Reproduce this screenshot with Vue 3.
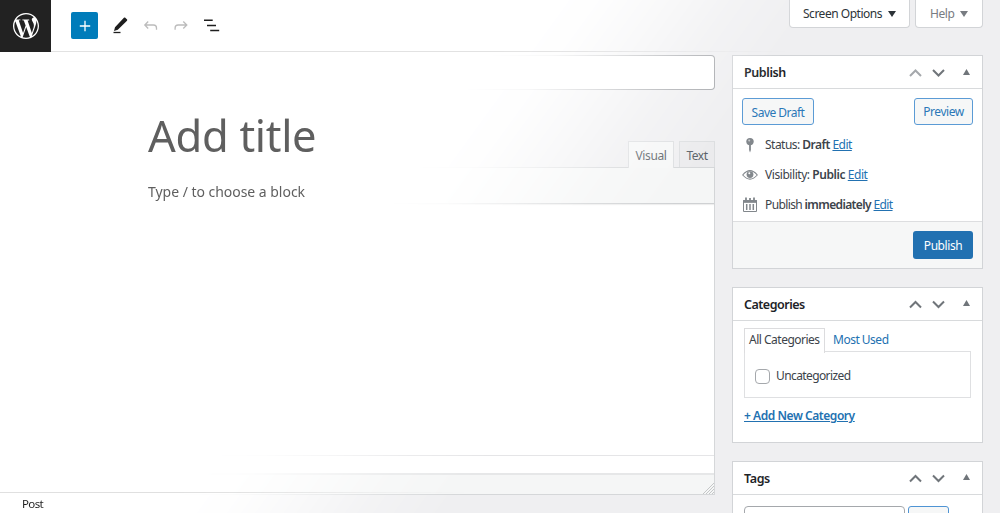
<script setup>
const statusRows = [
  { icon: 'pin', label: 'Status:', value: 'Draft' },
  { icon: 'eye', label: 'Visibility:', value: 'Public' },
  { icon: 'calendar', label: 'Publish', value: 'immediately' },
]
</script>

<template>
  <div class="screen">
    <!-- Classic editor -->
    <div class="classic">
      <main class="main">
        <div class="title-input"></div>
        <div class="tabs">
          <span class="tab tab-visual">Visual</span>
          <span class="tab tab-text">Text</span>
        </div>
        <div class="tinymce">
          <div class="mce-toolbar"></div>
          <div class="mce-body"></div>
          <div class="mce-path"></div>
          <div class="mce-status">
            <svg width="11" height="11" viewBox="0 0 11 11" fill="none" stroke="#b9bbbd" stroke-width=".8">
              <path d="M0 11 11 0M3 11l8-8M6 11l5-5M9 11l2-2" />
            </svg>
          </div>
        </div>
      </main>

      <aside class="side">
        <div class="screen-meta">
          <span class="meta-tab meta-options"><b class="t-screen">Screen Options</b><i class="down"></i></span>
          <span class="meta-tab meta-help"><b class="t-help">Help</b><i class="down"></i></span>
        </div>

        <section class="box publish">
          <header class="box-head">
            <h2 class="h-publish">Publish</h2>
            <svg class="arrows" width="64" height="12" viewBox="0 0 64 12" fill="none" stroke-width="2">
              <path d="M1 10 6.500 4.500 12 10" stroke="#a5a8ac" />
              <path d="M24 4 29.500 9.500 35 4" stroke="#70757a" />
              <path d="M54 9 57.500 3 61 9z" fill="#70757a" />
            </svg>
          </header>
          <div class="actions">
            <span class="btn btn-save">Save Draft</span>
            <span class="btn btn-preview">Preview</span>
          </div>
          <div v-for="row in statusRows" :key="row.icon" class="row">
            <svg v-if="row.icon === 'pin'" width="16" height="16" viewBox="0 0 16 16" fill="#82878c">
              <circle cx="8" cy="4.600" r="3.700" /><path d="M7.100 7h1.800v6L8 15.500 7.100 13z" />
              <circle cx="7.200" cy="3.500" r="1" fill="#c5c8ca" />
            </svg>
            <svg v-else-if="row.icon === 'eye'" width="16" height="16" viewBox="0 0 16 16">
              <path d="M.7 8Q8-.8 15.300 8 8 16.200.7 8z" fill="#fff" stroke="#82878c" stroke-width="1.100" />
              <circle cx="8" cy="7.600" r="3.400" fill="#82878c" /><circle cx="7.300" cy="6.300" r="1" fill="#fff" />
            </svg>
            <svg v-else width="16" height="16" viewBox="0 0 16 16" fill="none" stroke="#82878c">
              <path d="M1.500 3.500h13v11h-13z" fill="#fff" /><path d="M1.500 3.500h13v1.800h-13z" fill="#82878c" />
              <path d="M4 .5v3M8 1v2M12 .5v3" stroke-width="1.800" />
              <path d="M4.700 7v6M8 7v6M11.300 7v6" stroke-width="1.500" />
            </svg>
            <span class="row-text" :class="'r-' + row.icon">{{ row.label }} <strong>{{ row.value }}</strong> <a>Edit</a></span>
          </div>
          <footer class="publish-foot"><span class="btn-primary">Publish</span></footer>
        </section>

        <section class="box categories">
          <header class="box-head">
            <h2 class="h-cat">Categories</h2>
            <svg class="arrows" width="64" height="12" viewBox="0 0 64 12" fill="none" stroke="#70757a" stroke-width="2">
              <path d="M1 9.500 6.500 4 12 9.500M24 3.500 29.500 9 35 3.500" />
              <path d="M54 8 57.500 2 61 8z" fill="#70757a" stroke="none" />
            </svg>
          </header>
          <div class="cat-tabs">
            <span class="cat-tab">All Categories</span>
            <span class="cat-link">Most Used</span>
          </div>
          <div class="cat-panel"><i class="check"></i><span class="t-uncat">Uncategorized</span></div>
          <a class="add-cat">+ Add New Category</a>
        </section>

        <section class="box tags">
          <header class="box-head">
            <h2 class="h-tags">Tags</h2>
            <svg class="arrows" width="64" height="12" viewBox="0 0 64 12" fill="none" stroke="#70757a" stroke-width="2">
              <path d="M1 9.500 6.500 4 12 9.500M24 3.500 29.500 9 35 3.500" />
              <path d="M54 8 57.500 2 61 8z" fill="#70757a" stroke="none" />
            </svg>
          </header>
          <div class="tag-form"><i class="tag-input"></i><i class="tag-btn"></i></div>
        </section>
      </aside>
    </div>

    <!-- Block editor, dissolving diagonally into the classic one -->
    <div class="block-editor">
      <header class="bar">
        <div class="logo">
          <svg width="26" height="26" viewBox="0 0 24 24" fill="#fff">
            <path d="M21.469 6.825c.84 1.537 1.318 3.300 1.318 5.175 0 3.979-2.156 7.456-5.363 9.325l3.295-9.527c.615-1.540.82-2.771.82-3.864 0-.405-.026-.78-.07-1.110m-7.981.105c.647-.03 1.232-.105 1.232-.105.582-.075.514-.93-.067-.899 0 0-1.755.135-2.880.135-1.064 0-2.850-.15-2.850-.15-.585-.03-.661.855-.075.885 0 0 .54.061 1.125.09l1.680 4.605-2.370 7.080L5.354 6.900c.649-.03 1.234-.1 1.234-.1.585-.075.516-.93-.065-.896 0 0-1.746.138-2.874.138-.2 0-.438-.008-.69-.015C4.911 3.150 8.235 1.215 12 1.215c2.809 0 5.365 1.072 7.286 2.833-.046-.003-.091-.009-.141-.009-1.060 0-1.812.923-1.812 1.914 0 .89.513 1.643 1.060 2.531.411.72.89 1.643.89 2.977 0 .915-.354 1.994-.821 3.479l-1.075 3.585-3.900-11.610.001.014zM12 22.784c-1.059 0-2.081-.153-3.048-.437l3.237-9.406 3.315 9.087c.024.053.05.101.078.149-1.120.393-2.325.609-3.582.609M1.211 12c0-1.564.336-3.050.935-4.390L7.290 21.709C3.694 19.960 1.212 16.271 1.211 12M12 0C5.385 0 0 5.385 0 12s5.385 12 12 12 12-5.385 12-12S18.615 0 12 0" />
          </svg>
        </div>
        <div class="inserter">
          <svg width="12" height="12" viewBox="0 0 12 12" stroke="#fff" stroke-width="1.300"><path d="M6 .8v10.400M.8 6h10.400" /></svg>
        </div>
        <svg class="tools" width="108" height="20" viewBox="0 0 108 20" fill="none">
          <path d="M13 .6 15.100 2.600Q15.500 3.100 15 3.700L5.800 12.800 2 14 3 10.200 11.900.8Q12.500.1 13 .6z" fill="#1e1e1e" />
          <path d="M1.500 15.500H8.500" stroke="#1e1e1e" stroke-width="1.300" />
          <path d="M36.200 4.500 32.800 8l3.400 3.500M33 8h8.500q3 0 3 3v1.700" stroke="#bcbcbc" stroke-width="1.300" />
          <path d="M71.300 4.500 74.800 8l-3.500 3.500M74.600 8h-8.500q-3 0-3 3v1.700" stroke="#bcbcbc" stroke-width="1.300" />
          <path d="M92 3.300h8.700M95 8.400h9M98.200 13.400h9" stroke="#1e1e1e" stroke-width="1.500" />
        </svg>
      </header>
      <div class="canvas">
        <h1>Add title</h1>
        <p>Type / to choose a block</p>
      </div>
      <footer class="crumb"><span>Post</span></footer>
    </div>
  </div>
</template>

<style>
body { background: #efeff1; overflow: hidden; }
</style>

<style scoped>
* { box-sizing: border-box; }
.screen { position: relative; width: 1000px; height: 513px; overflow: hidden; background: #efeff1; font: 12px/16px "Noto Sans", "Open Sans", sans-serif; color: #3c434a; }
.classic { display: flex; gap: 17px; height: 513px; }
.main { width: 715px; padding-top: 55px; }
.title-input { height: 35px; background: #fff; border: 1px solid #a5a7ab; border-left: 0; border-radius: 0 4px 4px 0; }
.tabs { display: flex; justify-content: flex-end; gap: 5px; height: 26px; margin-top: 51px; }
.tab { border: 1px solid #dcdee0; border-bottom: 0; padding-top: 6px; text-align: center; color: #565d64; white-space: nowrap; }
.tab-visual { width: 46px; height: 27px; background: #f6f7f7; position: relative; letter-spacing: -.4px; }
.tab-text { width: 36px; background: #ebebed; letter-spacing: -.5px; }
.tinymce { height: 328px; background: #fff; border: 1px solid #d5d7d9; border-left: 0; }
.mce-toolbar { height: 36px; background: #f5f6f6; border-bottom: 1px solid #cfd1d3; box-shadow: 0 1px 1px #0001; }
.mce-body { height: 252px; border-bottom: 1px solid #e5e5e7; }
.mce-path { height: 17px; }
.mce-status { height: 21px; background: #f5f6f6; border-top: 2px solid #e6e7e8; display: flex; align-items: flex-end; justify-content: flex-end; }
.mce-status svg { display: block; }

.side { width: 251px; flex: none; }
.screen-meta { display: flex; justify-content: flex-end; gap: 5px; height: 55px; }
.meta-tab { height: 28px; background: #fff; border: 1px solid #d2d4d7; border-top: 0; border-radius: 0 0 4px 4px; display: flex; align-items: center; padding-top: 1px; white-space: nowrap; }
.meta-tab b { font-weight: 400; }
.meta-options { width: 121px; padding-left: 13px; gap: 6px; color: #2c3338; }
.meta-help { width: 68px; padding-left: 14px; gap: 7px; color: #787c82; }
.t-screen { width: 79px; letter-spacing: -.48px; }
.t-help { width: 23px; letter-spacing: -.4px; }
.down { width: 0; height: 0; margin-bottom: 1px; border: 4px solid transparent; border-top: 6px solid currentColor; border-bottom: 0; }

.box { background: #fff; border: 1px solid #d2d4d7; margin-bottom: 18px; }
.box-head { height: 33px; border-bottom: 1px solid #d8dadc; display: flex; align-items: center; justify-content: space-between; padding: 1px 9px 0 11px; }
.box-head h2 { margin: 0; font-size: 12.500px; line-height: 18px; font-weight: 600; color: #1d2327; }
.arrows { margin-bottom: 2px; }
.box-head h2.h-publish { letter-spacing: -.4px; line-height: 20px; padding-top: 1px; }
.h-cat { letter-spacing: -.5px; }
.h-tags { letter-spacing: -.4px; }
.publish { height: 214px; }
.actions { display: flex; justify-content: space-between; padding: 9px 9px 0; height: 40px; }
.btn { height: 27px; border: 1px solid #5b9bd5; border-radius: 3px; background: #f6f7f7; color: #2b78b8; text-align: center; line-height: 27px; white-space: nowrap; }
.btn-save { width: 72px; letter-spacing: -.52px; }
.btn-preview { width: 59px; letter-spacing: -.45px; line-height: 26px; }
.row { height: 30.300px; display: flex; align-items: center; gap: 7px; padding: 1px 0 0 9px; white-space: nowrap; }
.row strong { font-weight: 600; }
.row a, .add-cat { color: #2271b1; text-decoration: underline; }
.r-pin { letter-spacing: -.52px; }
.r-eye { letter-spacing: -.44px; }
.r-calendar { letter-spacing: -.62px; }
.publish-foot { height: 47px; margin-top: 1px; border-top: 1px solid #dddee0; background: #f6f7f7; display: flex; justify-content: flex-end; padding: 9px 9px 0; }
.btn-primary { width: 60px; height: 28px; border-radius: 3px; background: #2271b1; color: #fff; text-align: center; line-height: 29px; letter-spacing: -.43px; }
.categories { height: 156px; }
.cat-tabs { display: flex; padding: 7px 11px 0; height: 30px; white-space: nowrap; }
.cat-tab { width: 81px; height: 25px; border: 1px solid #dcdcde; border-bottom: 0; background: #fff; position: relative; line-height: 21px; padding-left: 4px; letter-spacing: -.5px; }
.cat-link { padding-left: 8px; line-height: 23px; color: #2271b1; letter-spacing: -.5px; }
.cat-panel { height: 47px; margin: 0 11px; border: 1px solid #dfe0e2; display: flex; align-items: center; gap: 6px; padding: 3px 0 0 10px; }
.check { width: 15px; height: 15px; border: 1px solid #a5a8ac; border-radius: 4px; }
.t-uncat { letter-spacing: -.6px; }
.add-cat { display: block; margin: 10px 0 0 11px; font-weight: 600; letter-spacing: -.45px; white-space: nowrap; }
.tags { height: 100px; }
.tag-form { display: flex; gap: 3px; padding: 11px 11px 0; }
.tag-input { width: 161px; height: 28px; border: 1px solid #a5a8ac; border-radius: 4px; }
.tag-btn { width: 41px; height: 28px; border: 1px solid #4f94d4; border-radius: 3px; background: #f6f7f7; }

.block-editor { position: absolute; inset: 0; display: flex; flex-direction: column; background: #fff; -webkit-mask-image: linear-gradient(126deg, #000 428px, #000000e8 480px, #000000a0 535px, #0004 595px, transparent 670px); mask-image: linear-gradient(126deg, #000 428px, #000000e8 480px, #000000a0 535px, #0004 595px, transparent 670px); }
.bar { height: 52px; border-bottom: 1px solid #e2e2e2; display: flex; align-items: flex-start; }
.logo { width: 51px; height: 52px; background: #222; display: flex; align-items: center; justify-content: center; }
.inserter { width: 27px; height: 27px; margin: 12px 0 0 20px; border-radius: 2px; background: #007cba; display: flex; align-items: center; justify-content: center; }
.tools { margin: 17px 0 0 14px; }
.canvas { flex: 1; padding: 58px 0 0 148px; color: #5f5f5f; }
h1 { margin: 0; font-size: 43.500px; line-height: 50px; font-weight: 400; letter-spacing: -.3px; }
p { margin: 22px 0 0; font-size: 14px; line-height: 20px; letter-spacing: -.03px; }
.crumb { height: 21px; border-top: 1px solid #e0e0e0; padding: 3px 0 0 22px; font-size: 11.500px; color: #1e1e1e; letter-spacing: -.6px; }
</style>
